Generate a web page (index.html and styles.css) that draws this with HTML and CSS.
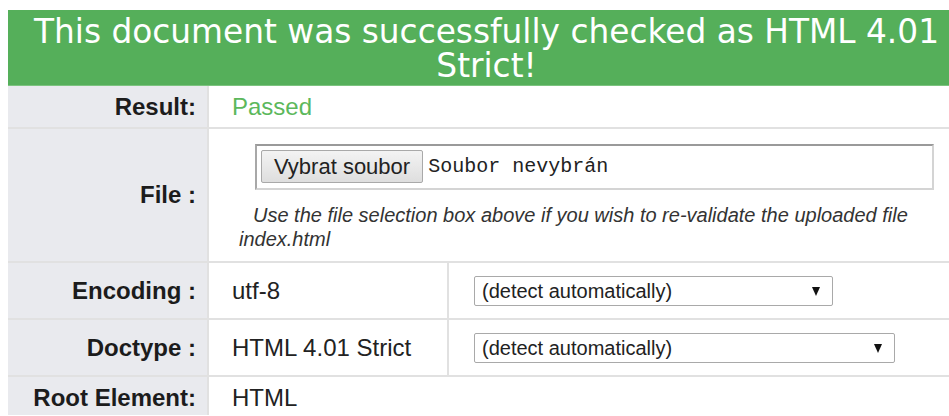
FILE: index.html
```html
<!DOCTYPE html>
<html lang="en">
<head>
<meta charset="utf-8">
<title>Validation result</title>
<link rel="stylesheet" href="styles.css">
</head>
<body>
<div class="page">
  <h2 class="valid">This document was successfully checked as HTML 4.01 Strict!</h2>
  <table class="header">
    <colgroup>
      <col class="col-label">
      <col class="col-value">
      <col>
    </colgroup>
    <tr class="result-row">
      <th>Result:</th>
      <td colspan="2" class="passed">Passed</td>
    </tr>
    <tr class="file-row">
      <th>File :</th>
      <td colspan="2">
        <div class="file-box">
          <span class="file-btn">Vybrat soubor</span>
          <span class="file-name">Soubor nevybrán</span>
        </div>
        <p class="instructions">Use the file selection box above if you wish to re-validate the uploaded file index.html</p>
      </td>
    </tr>
    <tr class="opt-row">
      <th>Encoding :</th>
      <td>utf-8</td>
      <td><div class="select select-charset">(detect automatically)<span class="arrow"></span></div></td>
    </tr>
    <tr class="opt-row">
      <th>Doctype :</th>
      <td>HTML 4.01 Strict</td>
      <td><div class="select select-doctype">(detect automatically)<span class="arrow"></span></div></td>
    </tr>
    <tr class="root-row">
      <th>Root Element:</th>
      <td colspan="2">HTML</td>
    </tr>
  </table>
</div>
</body>
</html>
```
FILE: styles.css
```css
html, body {
  overflow: hidden;
}

body {
  margin: 10px 0 0 8px;
  background: #fff;
  font-family: "Liberation Sans", Arial, sans-serif;
  color: #222;
}

.page {
  width: 957px;
}

.valid {
  margin: 0;
  padding: 5px 0 2px;
  background: #55af5a;
  border-bottom: 1px solid #7cc37f;
  color: #fff;
  font-family: "DejaVu Sans", Verdana, sans-serif;
  font-weight: normal;
  font-size: 32.8px;
  line-height: 34px;
  text-align: center;
}

.header {
  width: 100%;
  border-collapse: collapse;
  table-layout: fixed;
}

.col-label { width: 200px; }
.col-value { width: 240px; }

.header th,
.header td {
  border-bottom: 2px solid #e1e1e1;
  font-size: 24px;
  line-height: 28px;
  vertical-align: middle;
}

.header th {
  background: #e9eaee;
  border-right: 2px solid #e1e1e1;
  text-align: right;
  padding: 0 11px 0 0;
  font-weight: bold;
  color: #1c1c1c;
  white-space: nowrap;
}

.header td {
  padding: 0 0 0 23px;
  text-align: left;
  color: #222;
}

.result-row th,
.result-row td {
  height: 41px;
}

.header td.passed {
  color: #5cb85c;
}

.file-row th,
.file-row td {
  height: 128px;
}

.file-row td {
  padding-left: 30px;
  padding-top: 4px;
}

.file-box {
  width: 671px;
  height: 42px;
  margin-left: 16px;
  border: 2px solid #d4d4d4;
  border-top-color: #9a9a9a;
  border-left-color: #a8a8a8;
  display: flex;
  align-items: center;
  padding-left: 4px;
  box-sizing: content-box;
}

.file-btn {
  display: inline-block;
  height: 31px;
  line-height: 31px;
  padding: 0 12px;
  font-size: 22px;
  color: #222;
  background: linear-gradient(#f3f3f3, #dedede);
  border: 1px solid #a9a9a9;
  border-radius: 2px;
}

.file-name {
  margin-left: 5px;
  font-family: "Liberation Mono", "Courier New", monospace;
  font-size: 20px;
  color: #222;
}

.instructions {
  margin: 13px 20px 0 0;
  font-style: italic;
  font-size: 20px;
  line-height: 24px;
  color: #333;
  text-indent: 14px;
}

.opt-row th,
.opt-row td {
  height: 55px;
}

.opt-row td + td {
  border-left: 2px solid #e1e1e1;
  padding-left: 25px;
}

.select {
  position: relative;
  box-sizing: border-box;
  height: 30px;
  border: 1px solid #a9a9a9;
  border-radius: 2px;
  font-size: 20px;
  line-height: 28px;
  padding-left: 7px;
  color: #222;
}

.select-charset { width: 359px; }
.select-doctype { width: 421px; }

.arrow {
  position: absolute;
  right: 12px;
  top: 10px;
  width: 0;
  height: 0;
  border-left: 4.5px solid transparent;
  border-right: 4.5px solid transparent;
  border-top: 9px solid #111;
}

.root-row th,
.root-row td {
  height: 31px;
  border-bottom: none;
  vertical-align: top;
  padding-top: 7px;
}
```
